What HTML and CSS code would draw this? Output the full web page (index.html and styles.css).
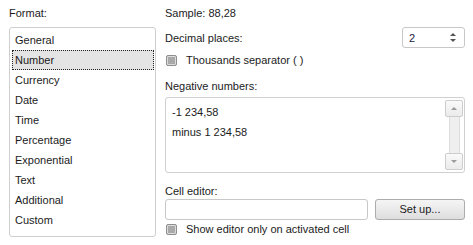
FILE: index.html
```html
<!DOCTYPE html>
<html>
<head>
<meta charset="utf-8">
<link rel="stylesheet" href="styles.css">
</head>
<body>
<div class="dialog">
  <div class="left">
    <div class="label">Format:</div>
    <div class="list">
      <div class="item">General</div>
      <div class="item selected">Number</div>
      <div class="item">Currency</div>
      <div class="item">Date</div>
      <div class="item">Time</div>
      <div class="item">Percentage</div>
      <div class="item">Exponential</div>
      <div class="item">Text</div>
      <div class="item">Additional</div>
      <div class="item">Custom</div>
    </div>
  </div>
  <div class="right">
    <div class="label">Sample: 88,28</div>
    <div class="row-dec">
      <span>Decimal places:</span>
      <div class="spin">
        <span class="spin-val">2</span>
        <span class="spin-arrows"><span class="up"></span><span class="down"></span></span>
      </div>
    </div>
    <div class="check-row"><span class="check"></span><span>Thousands separator ( )</span></div>
    <div class="label neg-label">Negative numbers:</div>
    <div class="neg-box">
      <div class="neg-items">
        <div class="neg-item">-1 234,58</div>
        <div class="neg-item">minus 1 234,58</div>
      </div>
      <div class="scrollbar">
        <div class="sb-btn"><span class="tri-up"></span></div>
        <div class="sb-track"></div>
        <div class="sb-btn"><span class="tri-down"></span></div>
      </div>
    </div>
    <div class="label cell-label">Cell editor:</div>
    <div class="editor-row">
      <div class="input"></div>
      <div class="button">Set up...</div>
    </div>
    <div class="check-row check-row2"><span class="check"></span><span>Show editor only on activated cell</span></div>
  </div>
</div>
</body>
</html>
```
FILE: styles.css
```css
* { box-sizing: border-box; }
html, body { margin: 0; padding: 0; background: #fff; }
body {
  font-family: "Liberation Sans", Arial, sans-serif;
  font-size: 11px;
  color: #1b1b1b;
  width: 473px;
  height: 245px;
  overflow: hidden;
}
.dialog {
  display: flex;
  gap: 9px;
  padding: 6px 0 0 9px;
}
.left { width: 147px; }
.label { height: 14px; line-height: 14px; }
.list {
  margin-top: 7px;
  height: 210px;
  border: 1px solid #cfcfcf;
  border-radius: 3px;
  padding: 2px 1px;
}
.item {
  height: 20px;
  line-height: 20px;
  padding-left: 4px;
}
.item.selected {
  background: #e4e4e4;
  outline: 1px dotted #222;
  outline-offset: -1px;
  margin-left: 1px;
  padding-left: 3px;
}
.right { width: 300px; display: flex; flex-direction: column; }
.row-dec {
  margin-top: 7px;
  height: 21px;
  display: flex;
  align-items: center;
  justify-content: space-between;
}
.spin {
  width: 63px;
  height: 21px;
  border: 1px solid #c8c8c8;
  border-radius: 3px;
  display: flex;
  align-items: center;
  justify-content: space-between;
  padding: 0 8px 0 6px;
}
.spin-val { font-size: 11px; color: #1a1a40; }
.spin-arrows { display: flex; flex-direction: column; gap: 3px; }
.up, .down { width: 0; height: 0; border-left: 3px solid transparent; border-right: 3px solid transparent; }
.up { border-bottom: 3px solid #555; }
.down { border-top: 3px solid #555; }
.check-row {
  margin-top: 5px;
  height: 14px;
  display: flex;
  align-items: center;
  gap: 9px;
}
.check {
  width: 11px;
  height: 11px;
  border: 1px solid #8e8e8e;
  border-radius: 2px;
  background: #a9a9a9;
  box-shadow: inset 0 0 0 1px #dcdcdc;
  margin-left: 1px;
}
.neg-label { margin-top: 12px; }
.neg-box {
  margin-top: 4px;
  height: 76px;
  border: 1px solid #d0d0d0;
  border-radius: 3px;
  display: flex;
  justify-content: space-between;
  padding: 2px 1px 2px 6px;
}
.neg-items { padding-top: 2px; }
.neg-item { height: 20px; line-height: 20px; }
.scrollbar {
  width: 18px;
  display: flex;
  flex-direction: column;
  align-items: center;
}
.sb-btn {
  width: 18px;
  height: 17px;
  border: 1px solid #cdcdcd;
  border-radius: 2px;
  background: linear-gradient(#fafafa, #ebebeb);
  display: flex;
  align-items: center;
  justify-content: center;
}
.sb-track {
  flex: 1;
  width: 11px;
  background: #efefef;
  border-left: 1px solid #dcdcdc;
  border-right: 1px solid #dcdcdc;
}
.tri-up, .tri-down { width: 0; height: 0; border-left: 3px solid transparent; border-right: 3px solid transparent; }
.tri-up { border-bottom: 3px solid #9a9a9a; }
.tri-down { border-top: 3px solid #9a9a9a; }
.cell-label { margin-top: 11px; }
.editor-row {
  margin-top: 1px;
  display: flex;
  gap: 7px;
  height: 21px;
}
.input {
  width: 203px;
  border: 1px solid #c8c8c8;
  border-radius: 3px;
}
.button {
  flex: 1;
  border: 1px solid #acacac;
  border-radius: 3px;
  background: linear-gradient(#f5f5f5, #dedede);
  text-align: center;
  line-height: 19px;
}
.check-row2 { margin-top: 2px; }
```
